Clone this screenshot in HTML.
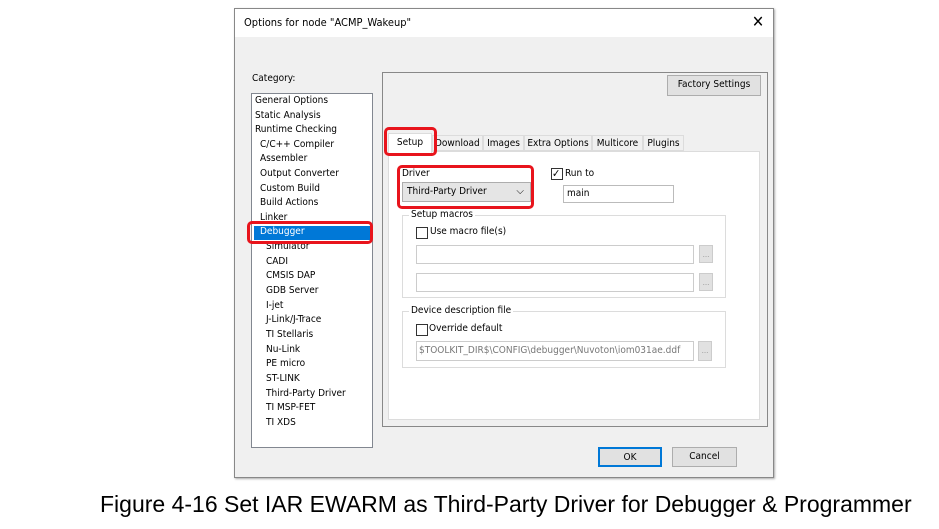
<!DOCTYPE html>
<html><head><meta charset="utf-8"><style>
*{margin:0;padding:0;box-sizing:border-box}
body{width:939px;height:529px;background:#fff;position:relative;overflow:hidden;font-family:Tahoma,"DejaVu Sans Condensed","Liberation Sans",sans-serif;font-size:10px;color:#000}
.a{position:absolute}
.dlg{left:234px;top:8px;width:540px;height:470px;background:#f0f0f0;border:1px solid #888;box-shadow:1px 1px 2px #aaa}
.tb{left:0;top:0;width:538px;height:28px;background:#fff}
.btn{background:#e1e1e1;border:1px solid #adadad;text-align:center;line-height:18px}
.red{border:3px solid #e8141c;border-radius:5px}
.li{left:3px;white-space:nowrap}
.grp{border:1px solid #dcdcdc}
.inp{background:#fff;border:1px solid #bbb}
.cb{width:12px;height:12px;border:1px solid #333;background:#fff}
.dots{width:14px;height:18px;background:#e1e1e1;border:1px solid #ccc;color:#999;font-size:8px;text-align:center;line-height:18px}
</style></head><body>
<div class="a dlg">
 <div class="a tb"></div>
 <div class="a" style="left:9px;top:7px;font-size:11px">Options for node "ACMP_Wakeup"</div>
 <div class="a" style="left:517px;top:3px;font-size:16px">✕</div>
 <div class="a" style="left:17px;top:64px">Category:</div>
 <div class="a" style="left:16px;top:84px;width:122px;height:355px;background:#fff;border:1px solid #828790">
  <div class="a li" style="top:1px">General Options</div>
  <div class="a li" style="top:16px">Static Analysis</div>
  <div class="a li" style="top:30px">Runtime Checking</div>
  <div class="a li" style="top:45px;left:8px">C/C++ Compiler</div>
  <div class="a li" style="top:59px;left:8px">Assembler</div>
  <div class="a li" style="top:74px;left:8px">Output Converter</div>
  <div class="a li" style="top:89px;left:8px">Custom Build</div>
  <div class="a li" style="top:103px;left:8px">Build Actions</div>
  <div class="a li" style="top:118px;left:8px">Linker</div>
  <div class="a" style="top:132px;left:2px;width:116px;height:14px;background:#0078d7"></div>
  <div class="a li" style="top:132px;left:8px;color:#fff">Debugger</div>
  <div class="a li" style="top:147px;left:14px">Simulator</div>
  <div class="a li" style="top:162px;left:14px">CADI</div>
  <div class="a li" style="top:176px;left:14px">CMSIS DAP</div>
  <div class="a li" style="top:191px;left:14px">GDB Server</div>
  <div class="a li" style="top:206px;left:14px">I-jet</div>
  <div class="a li" style="top:220px;left:14px">J-Link/J-Trace</div>
  <div class="a li" style="top:235px;left:14px">TI Stellaris</div>
  <div class="a li" style="top:250px;left:14px">Nu-Link</div>
  <div class="a li" style="top:264px;left:14px">PE micro</div>
  <div class="a li" style="top:279px;left:14px">ST-LINK</div>
  <div class="a li" style="top:294px;left:14px">Third-Party Driver</div>
  <div class="a li" style="top:308px;left:14px">TI MSP-FET</div>
  <div class="a li" style="top:323px;left:14px">TI XDS</div>
 </div>
 <div class="a red" style="left:12px;top:212px;width:126px;height:23px"></div>
 <div class="a" style="left:147px;top:63px;width:386px;height:355px;border:1px solid #888"></div>
 <div class="a btn" style="left:432px;top:66px;width:94px;height:21px">Factory Settings</div>
 <div class="a" style="left:153px;top:142px;width:372px;height:269px;background:#fff;border:1px solid #dcdcdc"></div>
 <div class="a" style="left:153px;top:124px;width:44px;height:20px;background:#fff;border:1px solid #dcdcdc;border-bottom:none;text-align:center;line-height:18px">Setup</div>
 <div class="a" style="left:197px;top:126px;width:51px;height:16px;border:1px solid #dcdcdc;line-height:15px;padding-left:2px">Download</div>
 <div class="a" style="left:248px;top:126px;width:41px;height:16px;border:1px solid #dcdcdc;line-height:15px;text-align:center">Images</div>
 <div class="a" style="left:289px;top:126px;width:68px;height:16px;border:1px solid #dcdcdc;line-height:15px;text-align:center">Extra Options</div>
 <div class="a" style="left:357px;top:126px;width:51px;height:16px;border:1px solid #dcdcdc;line-height:15px;text-align:center">Multicore</div>
 <div class="a" style="left:408px;top:126px;width:41px;height:16px;border:1px solid #dcdcdc;line-height:15px;text-align:center">Plugins</div>
 <div class="a red" style="left:149px;top:118px;width:53px;height:29px"></div>
 <div class="a" style="left:167px;top:159px">Driver</div>
 <div class="a" style="left:167px;top:173px;width:129px;height:20px;background:#e5e5e5;border:1px solid #adadad;line-height:18px;padding-left:4px">Third-Party Driver<span style="position:absolute;right:6px;top:0">⌵</span></div>
 <div class="a red" style="left:162px;top:156px;width:137px;height:44px"></div>
 <div class="a cb" style="left:316px;top:159px;font-size:11px;line-height:10px">✓</div>
 <div class="a" style="left:330px;top:159px">Run to</div>
 <div class="a inp" style="left:328px;top:176px;width:111px;height:18px;line-height:16px;padding-left:3px">main</div>
 <div class="a grp" style="left:167px;top:206px;width:324px;height:83px"></div>
 <div class="a" style="left:174px;top:200px;background:#fff;padding:0 2px">Setup macros</div>
 <div class="a cb" style="left:181px;top:218px"></div>
 <div class="a" style="left:195px;top:217px">Use macro file(s)</div>
 <div class="a inp" style="left:181px;top:236px;width:278px;height:19px;border-color:#ccc"></div>
 <div class="a dots" style="left:464px;top:236px">...</div>
 <div class="a inp" style="left:181px;top:264px;width:278px;height:19px;border-color:#ccc"></div>
 <div class="a dots" style="left:464px;top:264px">...</div>
 <div class="a grp" style="left:167px;top:302px;width:324px;height:57px"></div>
 <div class="a" style="left:174px;top:296px;background:#fff;padding:0 2px">Device description file</div>
 <div class="a cb" style="left:181px;top:315px"></div>
 <div class="a" style="left:194px;top:314px">Override default</div>
 <div class="a inp" style="left:181px;top:332px;width:278px;height:20px;border-color:#ccc;color:#777;line-height:18px;padding-left:2px;white-space:nowrap;overflow:hidden">$TOOLKIT_DIR$\CONFIG\debugger\Nuvoton\iom031ae.ddf</div>
 <div class="a dots" style="left:463px;top:332px;height:20px">...</div>
 <div class="a btn" style="left:363px;top:438px;width:64px;height:20px;border:2px solid #0078d7">OK</div>
 <div class="a btn" style="left:437px;top:438px;width:65px;height:20px">Cancel</div>
</div>
<div class="a" style="left:100px;top:491px;font-family:'Liberation Sans',Arial,sans-serif;font-size:23px;white-space:nowrap">Figure 4-16 Set IAR EWARM as Third-Party Driver for Debugger &amp; Programmer</div>
</body></html>
